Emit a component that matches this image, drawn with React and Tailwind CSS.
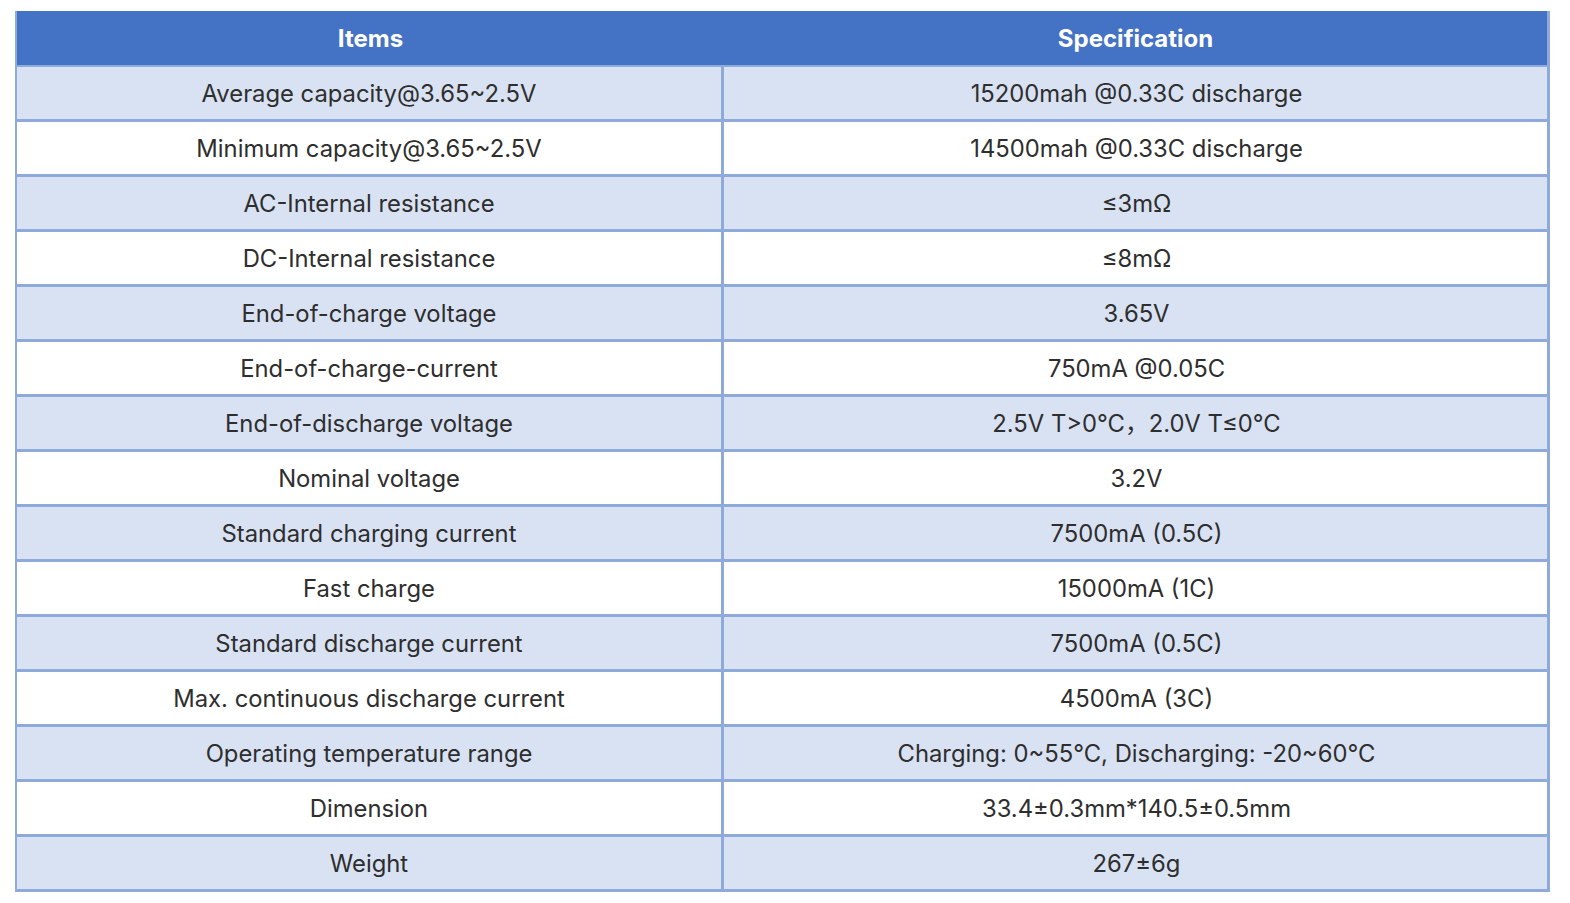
const specs = [
  ["Average capacity@3.65~2.5V", "15200mah @0.33C discharge"],
  ["Minimum capacity@3.65~2.5V", "14500mah @0.33C discharge"],
  ["AC-Internal resistance", "≤3mΩ"],
  ["DC-Internal resistance", "≤8mΩ"],
  ["End-of-charge voltage", "3.65V"],
  ["End-of-charge-current", "750mA @0.05C"],
  ["End-of-discharge voltage", "2.5V T>0°C，2.0V T≤0°C"],
  ["Nominal voltage", "3.2V"],
  ["Standard charging current", "7500mA (0.5C)"],
  ["Fast charge", "15000mA (1C)"],
  ["Standard discharge current", "7500mA (0.5C)"],
  ["Max. continuous discharge current", "4500mA (3C)"],
  ["Operating temperature range", "Charging: 0~55°C, Discharging: -20~60°C"],
  ["Dimension", "33.4±0.3mm*140.5±0.5mm"],
  ["Weight", "267±6g"],
];

export default function App() {
  return (
    <div className="min-h-screen bg-white pt-[11px] pl-[15px] font-['Inter','Noto_Sans_CJK_SC',sans-serif]">
      <div className="w-[1535px] border-l-2 border-r-[3px] border-[#8eaadb]">
        {/* Header */}
        <div className="grid h-[56px] grid-cols-[707px_1fr] border-b-2 border-[#8eaadb] bg-[#4472c4] text-[24px] font-bold text-white">
          <div className="flex items-center justify-center pt-[1px]">Items</div>
          <div className="flex items-center justify-center pt-[1px]">Specification</div>
        </div>
        {specs.map(([item, spec], i) => (
          <div
            key={item}
            className={`grid h-[55px] grid-cols-[707px_1fr] border-b-[3px] border-[#8eaadb] text-[23.8px] text-[#2e2e2e] ${
              i % 2 === 0 ? "bg-[#d9e2f3]" : "bg-white"
            }`}
          >
            <div className="flex items-center justify-center border-r-[3px] border-[#8eaadb] pt-[2px]">
              {item}
            </div>
            <div className="flex items-center justify-center pt-[2px] pl-[2px]">{spec}</div>
          </div>
        ))}
      </div>
    </div>
  );
}
